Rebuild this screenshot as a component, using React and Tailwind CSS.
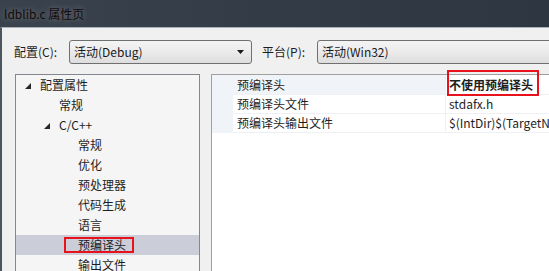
import React from "react";

const Tri = () => (
  <svg width="6" height="6" viewBox="0 0 6 6" className="block">
    <polygon points="6,0 6,6 0,6" fill="#262626" />
  </svg>
);

function Combo({ text, className = "" }) {
  return (
    <div
      className={`h-[24px] rounded-[3px] border border-[#707070] bg-gradient-to-b from-[#f4f4f4] via-[#ebebeb] to-[#dddddd] flex items-center pl-[4px] pr-[4px] ${className}`}
    >
      <span className="flex-1 text-[12px] text-[#1a1a1a] leading-none whitespace-nowrap">{text}</span>
      <svg width="7" height="4" viewBox="0 0 7 4" className="block mr-[3px]">
        <polygon points="0,0 7,0 3.5,4" fill="#1a1a1a" />
      </svg>
    </div>
  );
}

const treeRows = [
  { text: "配置属性", pl: "pl-[9px]", tri: true },
  { text: "常规", pl: "pl-[43px]" },
  { text: "C/C++", pl: "pl-[28px]", tri: true },
  { text: "常规", pl: "pl-[62px]" },
  { text: "优化", pl: "pl-[62px]" },
  { text: "预处理器", pl: "pl-[62px]" },
  { text: "代码生成", pl: "pl-[62px]" },
  { text: "语言", pl: "pl-[62px]" },
  { text: "预编译头", pl: "pl-[62px]", sel: true },
  { text: "输出文件", pl: "pl-[62px]" },
];

const props = [
  { name: "预编译头", value: "不使用预编译头", bold: true, first: true },
  { name: "预编译头文件", value: "stdafx.h" },
  { name: "预编译头输出文件", value: "$(IntDir)$(TargetName).pch" },
];

export default function App() {
  return (
    <div
      className="w-[549px] h-[271px] overflow-hidden flex flex-col bg-[#2f3842]"
      style={{ fontFamily: '"Noto Sans CJK SC", "Noto Sans", sans-serif' }}
    >
      {/* title bar */}
      <div className="h-[27px] shrink-0 flex items-center pl-[4px] bg-gradient-to-r from-[#3a434d] via-[#333c46] to-[#2e3741]">
        <span className="text-[12px] leading-none text-[#150a0a] [text-shadow:0_0_6px_rgba(255,255,255,0.35)]">
          ldblib.c 属性页
        </span>
      </div>

      {/* body */}
      <div className="flex-1 min-h-0 flex flex-col bg-[#f0f0f0] border-l-[2px] border-l-[#4d555e] border-t border-t-[#aab1b8]">
        <div className="h-[24px] mt-[12px] flex items-center pl-[12px] shrink-0">
          <span className="w-[55px] shrink-0 text-[12px] text-[#1e1e1e] leading-none">配置(C):</span>
          <Combo text="活动(Debug)" className="w-[183px] shrink-0" />
          <span className="ml-[10px] w-[55px] shrink-0 text-[12px] text-[#1e1e1e] leading-none">平台(P):</span>
          <Combo text="活动(Win32)" className="w-[260px] shrink-0" />
        </div>

        <div className="flex mt-[10px] flex-1 min-h-0">
          {/* tree */}
          <div className="ml-[13px] w-[185px] shrink-0 border border-b-0 border-[#828790] bg-[#f5f5f5] flex flex-col">
            {treeRows.map((r, i) => (
              <div
                key={i}
                className={`relative h-[20px] shrink-0 flex items-center ${r.pl} ${r.sel ? "bg-[#cbcdd9]" : ""}`}
              >
                {r.tri && (
                  <div className="w-[15px] flex items-end h-[10px] pb-[1px]">
                    <Tri />
                  </div>
                )}
                <span className="text-[12px] leading-none text-[#1e1e1e] whitespace-nowrap">{r.text}</span>
                {r.sel && (
                  <div className="absolute left-[48px] top-[2px] w-[70px] h-[16px] border-2 border-[#e8121c]" />
                )}
              </div>
            ))}
          </div>

          {/* property grid */}
          <div className="ml-[11px] w-[400px] shrink-0 border-l border-t border-[#a0a0a0] bg-white relative">
            {props.map((p, i) => (
              <div key={i} className={`flex ${p.first ? "h-[20px]" : "h-[19px]"}`}>
                <div className="w-[21px] bg-[#f0f4f9] shrink-0" />
                <div
                  className={`w-[213px] shrink-0 flex items-center pl-[4px] border-b border-r border-[#eef0f3] ${
                    p.first ? "bg-[#f0f4f9]" : "bg-white"
                  }`}
                >
                  <span className="text-[12px] leading-none text-[#1e1e1e] whitespace-nowrap">{p.name}</span>
                </div>
                <div className="flex-1 flex items-center pl-[3px] border-b border-[#eef0f3] overflow-hidden whitespace-nowrap">
                  <span className={`text-[12px] leading-none text-[#1e1e1e] ${p.bold ? "font-bold" : ""}`}>
                    {p.value}
                  </span>
                </div>
              </div>
            ))}
            <div className="absolute left-[235px] top-[-5px] w-[92px] h-[26px] border-2 border-[#e8121c]" />
          </div>
        </div>
      </div>
    </div>
  );
}
